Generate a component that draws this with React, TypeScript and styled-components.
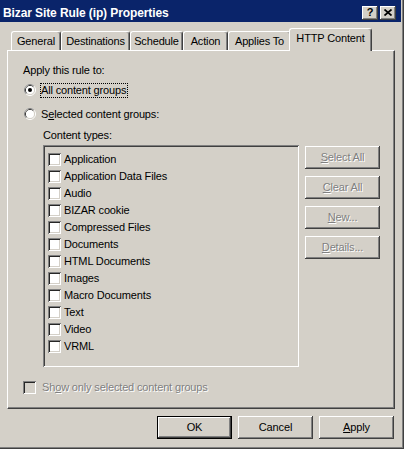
import React from "react";
import styled, { createGlobalStyle } from "styled-components";

const GlobalStyle = createGlobalStyle`
  html, body {
    margin: 0;
    padding: 0;
    background: #d4d0c8;
  }
  body {
    font-family: "Liberation Sans", Arial, sans-serif;
    font-size: 11px;
    letter-spacing: -0.15px;
    color: #000;
  }
`;

const contentTypes = [
  "Application",
  "Application Data Files",
  "Audio",
  "BIZAR cookie",
  "Compressed Files",
  "Documents",
  "HTML Documents",
  "Images",
  "Macro Documents",
  "Text",
  "Video",
  "VRML",
];

const tabs = [
  { label: "General", width: 50 },
  { label: "Destinations", width: 69 },
  { label: "Schedule", width: 53 },
  { label: "Action", width: 45 },
  { label: "Applies To", width: 63 },
  { label: "HTTP Content", width: 79, active: true },
];

const RadioDot = ({ checked }: { checked?: boolean }) => (
  <svg width="12" height="12" viewBox="0 0 12 12">
    <circle cx="6" cy="6" r="5.5" fill="none" stroke="#ffffff" />
    <path d="M2.11 9.89 A5.5 5.5 0 0 1 9.89 2.11" fill="none" stroke="#808080" />
    <circle cx="6" cy="6" r="4.5" fill="none" stroke="#d4d0c8" />
    <path d="M2.82 9.18 A4.5 4.5 0 0 1 9.18 2.82" fill="none" stroke="#404040" />
    <circle cx="6" cy="6" r="4" fill="#ffffff" />
    {checked && <circle cx="6" cy="6" r="2" fill="#000" />}
  </svg>
);

const CloseGlyph = () => (
  <svg width="8" height="7" viewBox="0 0 8 7">
    <path d="M0.5 0.5 L7.5 6.5 M7.5 0.5 L0.5 6.5" stroke="#000" strokeWidth="1.7" />
  </svg>
);

export default function App() {
  return (
    <>
      <GlobalStyle />
      <Window>
        <TitleBar>
          <Title>Bizar Site Rule (ip) Properties</Title>
          <CaptionButtons>
            <CaptionButton>?</CaptionButton>
            <CaptionButton>
              <CloseGlyph />
            </CaptionButton>
          </CaptionButtons>
        </TitleBar>

        <Body>
          <TabStrip>
            {tabs.map((t) => (
              <Tab key={t.label} $w={t.width} $active={t.active}>
                {t.label}
              </Tab>
            ))}
          </TabStrip>

          <Panel>
            <Label>Apply this rule to:</Label>

            <RadioRow $first>
              <RadioDot checked />
              <RadioText $focused>All content groups</RadioText>
            </RadioRow>
            <RadioRow>
              <RadioDot />
              <RadioText>
                S<u>e</u>lected content groups:
              </RadioText>
            </RadioRow>

            <SubLabel>Content types:</SubLabel>

            <ListRow>
              <ListBox>
                {contentTypes.map((name) => (
                  <ListItem key={name}>
                    <CheckBox />
                    <span>{name}</span>
                  </ListItem>
                ))}
              </ListBox>
              <SideButtons>
                <Button disabled>
                  <u>S</u>elect All
                </Button>
                <Button disabled>
                  <u>C</u>lear All
                </Button>
                <Button disabled>
                  <u>N</u>ew...
                </Button>
                <Button disabled>
                  <u>D</u>etails...
                </Button>
              </SideButtons>
            </ListRow>

            <ShowOnlyRow>
              <CheckBox $disabled />
              <DisabledText>
                Sh<u>o</u>w only selected content groups
              </DisabledText>
            </ShowOnlyRow>
          </Panel>

          <Footer>
            <Button $default>OK</Button>
            <Button>Cancel</Button>
            <Button>
              <u>A</u>pply
            </Button>
          </Footer>
        </Body>
      </Window>
    </>
  );
}

const Window = styled.div`
  box-sizing: border-box;
  width: 404px;
  height: 449px;
  padding: 0 3px 3px 0;
  background: #d4d0c8;
  display: flex;
  flex-direction: column;
  box-shadow: inset -1px -1px #404040, inset -2px -2px #808080;
`;

const TitleBar = styled.div`
  box-sizing: border-box;
  height: 22px;
  padding: 4px 5px 0 3px;
  background: #0a246a;
  display: flex;
  align-items: center;
`;

const Title = styled.div`
  flex: 1;
  color: #ffffff;
  font-weight: bold;
  font-size: 12px;
  letter-spacing: -0.1px;
  line-height: 14px;
  white-space: nowrap;
`;

const CaptionButtons = styled.div`
  display: flex;
  gap: 2px;
`;

const CaptionButton = styled.div`
  box-sizing: border-box;
  width: 16px;
  height: 14px;
  background: #d4d0c8;
  box-shadow: inset -1px -1px #404040, inset 1px 1px #ffffff,
    inset -2px -2px #808080, inset 2px 2px #d4d0c8;
  display: flex;
  align-items: center;
  justify-content: center;
  font-weight: bold;
  font-size: 11px;
  line-height: 11px;
  padding-bottom: 1px;
`;

const Body = styled.div`
  display: flex;
  flex-direction: column;
  padding: 6px 0 0 7px;
`;

const TabStrip = styled.div`
  height: 22px;
  display: flex;
  align-items: flex-end;
  padding-left: 4px;
`;

const Tab = styled.div<{ $w: number; $active?: boolean }>`
  box-sizing: border-box;
  position: relative;
  z-index: ${(p) => (p.$active ? 1 : 0)};
  width: ${(p) => (p.$active ? p.$w + 4 : p.$w)}px;
  height: ${(p) => (p.$active ? 23 : 19)}px;
  margin: ${(p) => (p.$active ? "0 -2px -1px -2px" : "0")};
  padding-top: 3px;
  background: #d4d0c8;
  border-top: 1px solid #ffffff;
  border-left: 1px solid #ffffff;
  border-right: 1px solid #404040;
  border-radius: 3px 3px 0 0;
  box-shadow: inset -1px 0 #808080;
  display: flex;
  justify-content: center;
  line-height: 13px;
  white-space: nowrap;
`;

const Panel = styled.div`
  box-sizing: border-box;
  width: 388px;
  height: 359px;
  padding: 13px 0 0 15px;
  border-top: 1px solid #ffffff;
  border-left: 1px solid #ffffff;
  border-right: 1px solid #404040;
  border-bottom: 1px solid #404040;
  box-shadow: inset -1px -1px #808080;
  display: flex;
  flex-direction: column;
`;

const Label = styled.div`
  line-height: 13px;
`;

const RadioRow = styled.div<{ $first?: boolean }>`
  display: flex;
  align-items: flex-start;
  height: 15px;
  margin-top: ${(p) => (p.$first ? 6 : 9)}px;
  padding-left: 1px;

  > svg {
    margin-top: 1px;
    flex-shrink: 0;
  }
`;

const RadioText = styled.span<{ $focused?: boolean }>`
  margin-left: 4px;
  padding: 0 1px 0 0;
  line-height: 13px;
  border: 1px ${(p) => (p.$focused ? "dotted #000" : "solid transparent")};
  white-space: nowrap;
`;

const SubLabel = styled.div`
  margin: 7px 0 0 20px;
  line-height: 13px;
`;

const ListRow = styled.div`
  display: flex;
  align-items: flex-start;
  margin: 3px 0 0 20px;
`;

const ListBox = styled.div`
  box-sizing: border-box;
  width: 256px;
  height: 222px;
  padding: 6px 0 0 5px;
  background: #d4d0c8;
  box-shadow: inset 1px 1px #808080, inset -1px -1px #ffffff,
    inset 2px 2px #404040, inset -2px -2px #d4d0c8;
  display: flex;
  flex-direction: column;
`;

const ListItem = styled.div`
  height: 17px;
  display: flex;
  align-items: center;
  gap: 3px;
  line-height: 13px;
  white-space: nowrap;
`;

const CheckBox = styled.div<{ $disabled?: boolean }>`
  box-sizing: border-box;
  width: 13px;
  height: 13px;
  flex-shrink: 0;
  background: ${(p) => (p.$disabled ? "#d4d0c8" : "#ffffff")};
  box-shadow: inset 1px 1px #808080, inset -1px -1px #ffffff,
    inset 2px 2px #262626, inset -2px -2px #d4d0c8;
`;

const SideButtons = styled.div`
  display: flex;
  flex-direction: column;
  gap: 7px;
  margin: 1px 0 0 6px;
`;

const Button = styled.button<{ $default?: boolean }>`
  box-sizing: border-box;
  width: 75px;
  height: 23px;
  padding: 0;
  border: none;
  background: #d4d0c8;
  font-family: inherit;
  font-size: 11px;
  letter-spacing: inherit;
  line-height: 13px;
  color: #000;
  box-shadow: ${(p) =>
    p.$default
      ? "inset 0 0 0 1px #000, inset -2px -2px #404040, inset 2px 2px #ffffff, inset -3px -3px #808080"
      : "inset -1px -1px #404040, inset 1px 1px #ffffff, inset -2px -2px #808080, inset 2px 2px #d4d0c8"};

  &:disabled {
    color: #808080;
    text-shadow: 1px 1px #ffffff;
  }
`;

const ShowOnlyRow = styled.div`
  display: flex;
  align-items: flex-start;
  gap: 6px;
  margin-top: 14px;
`;

const DisabledText = styled.span`
  line-height: 13px;
  color: #808080;
  text-shadow: 1px 1px #ffffff;
  white-space: nowrap;
`;

const Footer = styled.div`
  box-sizing: border-box;
  width: 388px;
  display: flex;
  justify-content: flex-end;
  gap: 6px;
  margin-top: 7px;
  padding-right: 1px;
`;
